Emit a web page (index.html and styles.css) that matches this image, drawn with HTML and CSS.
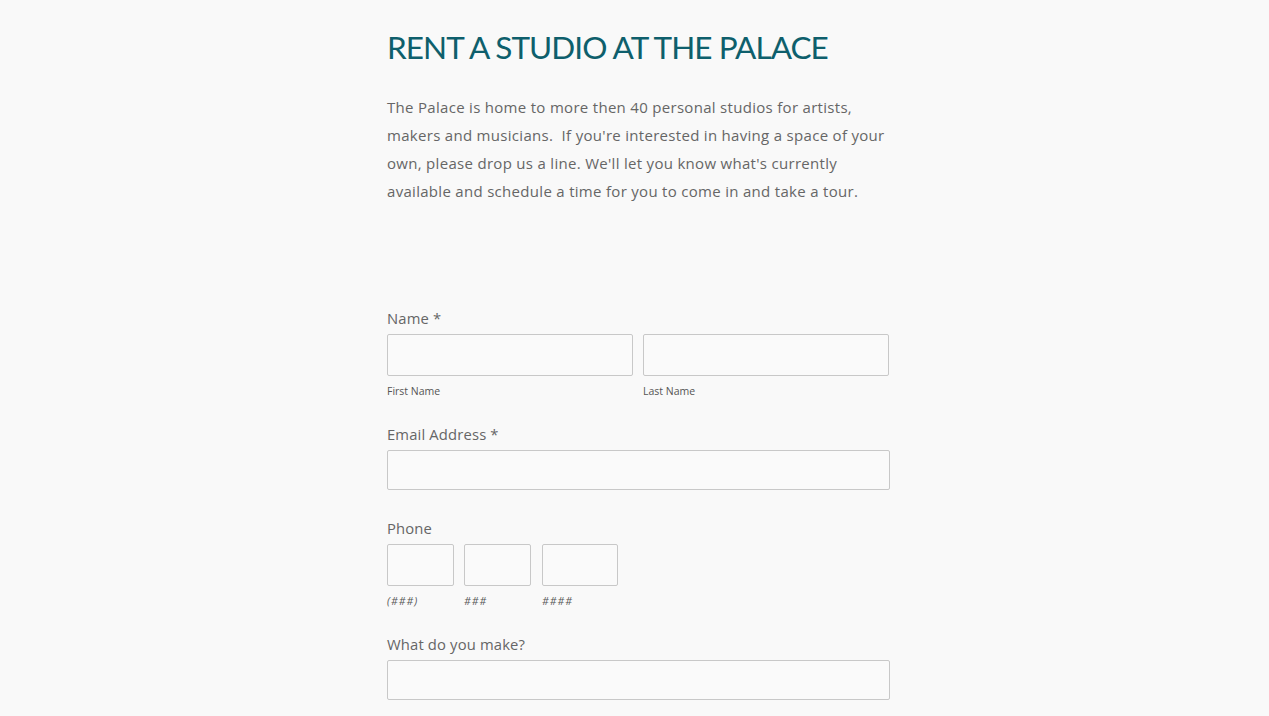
FILE: index.html
```html
<!DOCTYPE html>
<html>
<head>
<meta charset="utf-8">
<link rel="stylesheet" href="styles.css">
</head>
<body>
<main class="page">
  <h1 class="title">RENT A STUDIO AT THE PALACE</h1>
  <p class="intro">The Palace is home to more then 40 personal studios for artists, makers and musicians.&nbsp; If you're interested in having a space of your own, please drop us a line. We'll let you know what's currently available and schedule a time for you to come in and take a tour.</p>

  <form class="form">
    <div class="field">
      <div class="label">Name *</div>
      <div class="row">
        <div class="col half">
          <input class="input" type="text">
          <div class="sub">First Name</div>
        </div>
        <div class="col half">
          <input class="input" type="text">
          <div class="sub">Last Name</div>
        </div>
      </div>
    </div>

    <div class="field wide">
      <div class="label">Email Address *</div>
      <input class="input short" type="text">
    </div>

    <div class="field">
      <div class="label">Phone</div>
      <div class="row">
        <div class="col p3">
          <input class="input" type="text">
          <div class="sub mono">(###)</div>
        </div>
        <div class="col p3">
          <input class="input" type="text">
          <div class="sub mono">###</div>
        </div>
        <div class="col p4">
          <input class="input" type="text">
          <div class="sub mono">####</div>
        </div>
      </div>
    </div>

    <div class="field">
      <div class="label">What do you make?</div>
      <input class="input short" type="text">
    </div>
  </form>
</main>
</body>
</html>
```
FILE: styles.css
```css
html, body {
  margin: 0;
  padding: 0;
  background: #f9f9f9;
}
body {
  font-family: "Open Sans", "Liberation Sans", sans-serif;
  color: #666;
}
.page {
  width: 503px;
  margin-left: calc(50% - 247.5px);
  padding-top: 27px;
}
.title {
  margin: 0;
  font-family: "Lato", sans-serif;
  font-weight: 400;
  font-size: 31.5px;
  line-height: 40px;
  color: #0e5f6c;
  letter-spacing: -0.95px;
}
.intro {
  margin: 26px 0 0 0;
  width: 503px;
  font-size: 15px;
  line-height: 28px;
  color: #666;
  letter-spacing: 0.3px;
}
.form {
  margin-top: 104px;
}
.field {
  margin-bottom: 27px;
}
.field.wide {
  margin-bottom: 29px;
}
.label {
  font-size: 14.8px;
  line-height: 18px;
  margin-bottom: 7px;
  color: #666;
  letter-spacing: 0.15px;
}
.row {
  display: flex;
  gap: 10px;
}
.col.half { width: 246px; }
.col.p3 { width: 67px; }
.col.p4 { width: 76px; }
.col.p3 + .col.p4 { margin-left: 1px; }
.input {
  display: block;
  box-sizing: border-box;
  width: 100%;
  height: 42px;
  margin: 0;
  border: 1px solid #c8c8c8;
  border-radius: 2px;
  background: #fafafa;
  outline: none;
}
.input.short {
  height: 40px;
}
.sub {
  font-size: 10.5px;
  line-height: 14px;
  margin-top: 8px;
  color: #555;
}
.sub.mono {
  font-style: italic;
  letter-spacing: 1px;
}
```
